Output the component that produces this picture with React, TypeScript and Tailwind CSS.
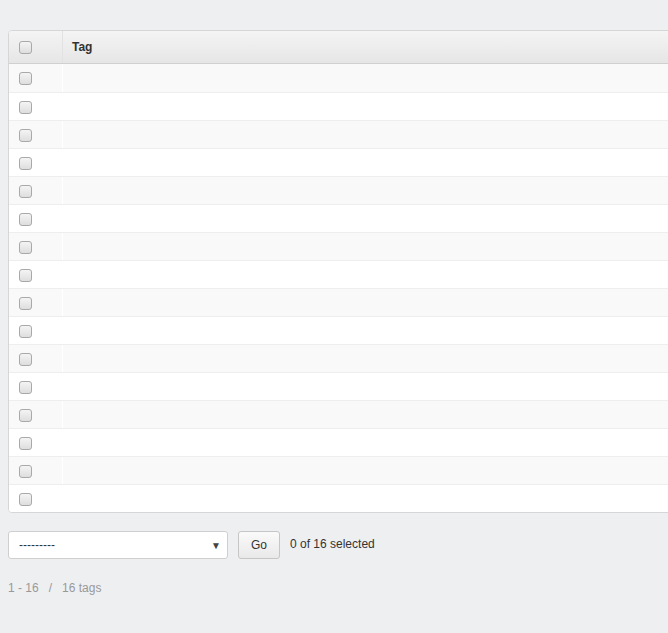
import React from "react";

const Box = () => (
  <span className="inline-block w-[13px] h-[13px] rounded-[3px] border border-[#a9a9a9] bg-gradient-to-b from-[#f4f4f4] to-[#dedede] align-middle" />
);

export default function App() {
  const rows = Array.from({ length: 16 }, (_, i) => i);
  return (
    <div className="w-[668px] h-[633px] overflow-hidden bg-[#eeeff1] font-['Liberation_Sans',Arial,sans-serif] text-[#333]">
      <div className="pt-[30px] pl-2">
        <div className="w-[700px] border border-[#d6d6d6] rounded-[4px] bg-white overflow-hidden">
          <div className="flex h-[33px] bg-gradient-to-b from-[#f4f4f4] to-[#e6e6e6] border-b border-[#d0d0d0]">
            <div className="w-[54px] flex items-center pl-[10px] border-r border-[#e2e2e2]">
              <Box />
            </div>
            <div className="flex items-center pl-[9px] text-[12px] font-bold text-[#333]">Tag</div>
          </div>
          {rows.map((i) => (
            <div
              key={i}
              className={`flex h-[28px] ${i > 0 ? "border-t border-[#eeeeee]" : ""} ${i % 2 === 0 ? "bg-[#f9f9f9]" : "bg-white"}`}
            >
              <div className={`w-[54px] flex items-center pl-[10px] pt-[1px] ${i % 2 === 0 ? "border-r border-[#ffffff]" : ""}`}>
                <Box />
              </div>
              <div className="flex-1" />
            </div>
          ))}
        </div>
        <div className="flex items-center mt-[18px] h-[28px]">
          <div className="relative w-[220px] h-[28px] bg-white border border-[#cfcfcf] rounded-[3px] flex items-center pl-[10px] text-[12px] text-[#333]">
            ---------
            <span className="absolute right-[6px] top-[6px] text-[10px] text-[#444]">▼</span>
          </div>
          <div className="ml-[10px] w-[42px] h-[28px] border border-[#c6c6c6] rounded-[3px] bg-gradient-to-b from-[#fafafa] to-[#e9e9e9] flex items-center justify-center text-[12px] text-[#333]">
            Go
          </div>
          <div className="ml-[10px] text-[12px] text-[#333] -mt-[2px]">0 of 16 selected</div>
        </div>
        <div className="mt-[20px] text-[12px] text-[#999] whitespace-pre">1 - 16   /   16 tags</div>
      </div>
    </div>
  );
}
